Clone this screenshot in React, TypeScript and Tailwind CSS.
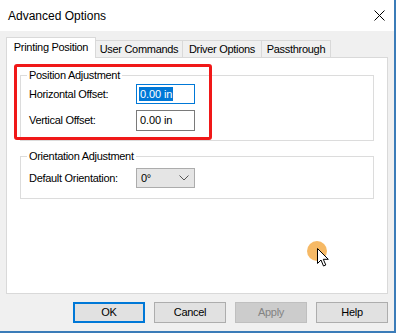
const TABS = [
  { label: 'Printing Position', width: 'w-[90px]' },
  { label: 'User Commands', width: 'w-[87px]' },
  { label: 'Driver Options', width: 'w-[79px]' },
  { label: 'Passthrough', width: 'w-[69px]' },
]

function GroupBox({ title, className, children }: { title: string; className: string; children: React.ReactNode }) {
  return (
    <div className={`relative border border-[#dcdcdc] ${className}`}>
      <span className="absolute -top-[8px] left-[6px] bg-white px-[2px] leading-[14px]">{title}</span>
      {children}
    </div>
  )
}

function Button({ label, variant }: { label: string; variant?: 'default' | 'disabled' }) {
  const look =
    variant === 'default'
      ? 'border-2 border-[#0078d7] bg-[#e1e1e1]'
      : variant === 'disabled'
        ? 'border border-[#bfbfbf] bg-[#cccccc] text-[#838383]'
        : 'border border-[#adadad] bg-[#e1e1e1]'
  return (
    <button className={`w-[72px] h-[21px] flex items-center justify-center ${look}`}>{label}</button>
  )
}

export default function App() {
  return (
    <div className="w-[396px] h-[333px] flex flex-col bg-[#f0f0f0] border-r-2 border-b-2 border-[#3b7cb8] font-['Liberation_Sans',Arial,sans-serif] text-[11px] tracking-[-0.3px] text-black overflow-hidden">
      {/* Title bar */}
      <div className="h-[31px] shrink-0 bg-white flex items-center justify-between pl-[8px] pr-[9px]">
        <span className="text-[12px] tracking-normal">Advanced Options</span>
        <svg width="11" height="11" viewBox="0 0 11 11">
          <path d="M0.5 0.5 L10.5 10.5 M10.5 0.5 L0.5 10.5" stroke="black" strokeWidth="1" />
        </svg>
      </div>

      <div className="flex-1 flex flex-col px-[6px] pt-[6px]">
        {/* Tabs */}
        <div className="flex items-end h-[20px] relative z-10">
          {TABS.map((tab, i) =>
            i === 0 ? (
              <div
                key={tab.label}
                className={`${tab.width} h-[21px] -mb-[1px] bg-white border border-b-0 border-[#d9d9d9] flex items-center justify-center pb-[1px]`}
              >
                {tab.label}
              </div>
            ) : (
              <div
                key={tab.label}
                className={`${tab.width} h-[17px] bg-[#f0f0f0] border-t border-r border-[#d9d9d9] flex items-center justify-center`}
              >
                {tab.label}
              </div>
            )
          )}
        </div>

        {/* Panel */}
        <div className="relative h-[237px] bg-white border border-[#d9d9d9] px-[13px] pt-[17px]">
          <GroupBox title="Position Adjustment" className="h-[66px] pl-[8px] pt-[8px] flex flex-col gap-[6px]">
            <div className="flex items-center">
              <span className="w-[107px]">Horizontal Offset:</span>
              <div className="w-[59px] h-[20px] border border-[#0078d7] flex items-center pl-[2px]">
                <span className="bg-[#0078d7] text-white leading-[14px] px-[1px] tracking-[-0.1px]">0.00 in</span>
              </div>
            </div>
            <div className="flex items-center">
              <span className="w-[107px]">Vertical Offset:</span>
              <div className="w-[59px] h-[21px] border border-[#7a7a7a] flex items-center pl-[3px] tracking-[-0.1px]">0.00 in</div>
            </div>
          </GroupBox>

          <GroupBox title="Orientation Adjustment" className="mt-[15px] h-[43px] pl-[8px] pt-[11px]">
            <div className="flex items-center">
              <span className="w-[107px]">Default Orientation:</span>
              <div className="w-[59px] h-[20px] border border-[#acacac] bg-[#e5e5e5] flex items-center justify-between pl-[4px] pr-[5px]">
                <span>0°</span>
                <svg width="10" height="6" viewBox="0 0 10 6" fill="none">
                  <path d="M0.5 0.5 L5 5 L9.5 0.5" stroke="#555" strokeWidth="1" />
                </svg>
              </div>
            </div>
          </GroupBox>

          {/* red annotation */}
          <div className="absolute left-[7px] top-[6px] w-[198px] h-[76px] border-[3px] border-[#f01818] rounded-[3px] pointer-events-none" />

          {/* cursor with click highlight */}
          <div className="absolute left-[300px] top-[183px] w-[20px] h-[20px] rounded-full bg-[#f4ad4a] opacity-85" />
          <svg className="absolute left-[310px] top-[190px]" width="13" height="20" viewBox="0 0 13 20">
            <path
              d="M0.5 0.5 L0.5 15.5 L4 12 L6.5 18 L8.8 17 L6.3 11.3 L11.3 11.3 Z"
              fill="white"
              stroke="black"
              strokeWidth="1"
              strokeLinejoin="round"
            />
          </svg>
        </div>

        {/* Buttons */}
        <div className="flex justify-end gap-[9px] pt-[8px]">
          <Button label="OK" variant="default" />
          <Button label="Cancel" />
          <Button label="Apply" variant="disabled" />
          <Button label="Help" />
        </div>
      </div>
    </div>
  )
}
